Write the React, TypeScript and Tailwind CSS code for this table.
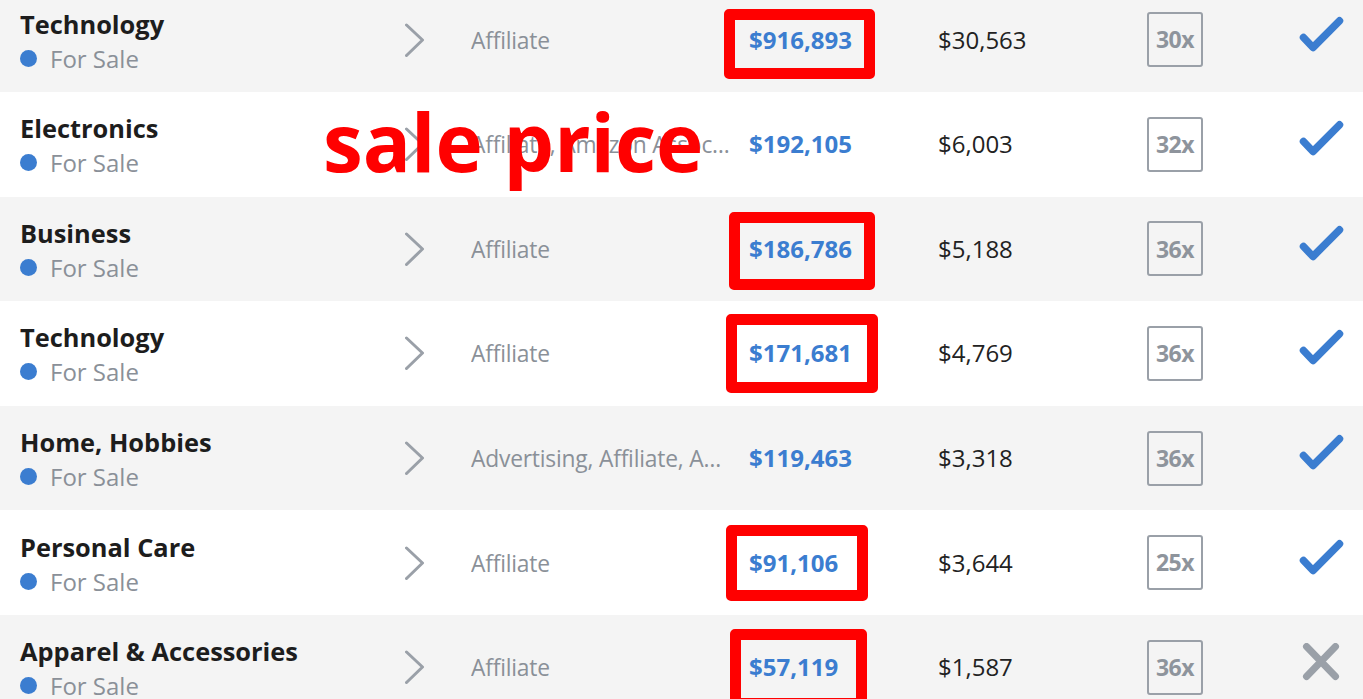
import React from "react";

type Listing = {
  name: string;
  type: string;
  price: string;
  monthly: string;
  multiple: string;
  verified: boolean;
};

const listings: Listing[] = [
  { name: "Technology", type: "Affiliate", price: "$916,893", monthly: "$30,563", multiple: "30x", verified: true },
  { name: "Electronics", type: "Affiliate, Amazon Associates", price: "$192,105", monthly: "$6,003", multiple: "32x", verified: true },
  { name: "Business", type: "Affiliate", price: "$186,786", monthly: "$5,188", multiple: "36x", verified: true },
  { name: "Technology", type: "Affiliate", price: "$171,681", monthly: "$4,769", multiple: "36x", verified: true },
  { name: "Home, Hobbies", type: "Advertising, Affiliate, Amazon Associates", price: "$119,463", monthly: "$3,318", multiple: "36x", verified: true },
  { name: "Personal Care", type: "Affiliate", price: "$91,106", monthly: "$3,644", multiple: "25x", verified: true },
  { name: "Apparel & Accessories", type: "Affiliate", price: "$57,119", monthly: "$1,587", multiple: "36x", verified: false },
];

// annotation boxes drawn over the price column
const marks = [
  "left-[724px] top-[9px] w-[151px] h-[70px]",
  "left-[729px] top-[212px] w-[146px] h-[78px]",
  "left-[726px] top-[314px] w-[152px] h-[79px]",
  "left-[726px] top-[525px] w-[142px] h-[76px]",
  "left-[730px] top-[629px] w-[137px] h-[80px]",
];

function Chevron() {
  return (
    <svg width="20" height="36" viewBox="0 0 20 36" fill="none">
      <path d="M1.5 3 L17.5 18 L1.5 33.5" stroke="#9aa0a8" strokeWidth="3" strokeLinecap="round" strokeLinejoin="round" />
    </svg>
  );
}

function Status({ ok }: { ok: boolean }) {
  return (
    <svg width="48" height="48" viewBox="0 0 48 48" fill="none">
      {ok ? (
        <path d="M6.5 21.5 L16 31.5 L42.5 4.8" stroke="#3b7dd0" strokeWidth="7.5" strokeLinecap="round" strokeLinejoin="round" />
      ) : (
        <path d="M9.5 3.5 L38.5 33.5 M38.5 3.5 L9.5 33.5" stroke="#9aa0a8" strokeWidth="7" strokeLinecap="round" />
      )}
    </svg>
  );
}

function Row({ item, shaded }: { item: Listing; shaded: boolean }) {
  return (
    <div className={`flex h-[104.6px] items-center pl-[20px] ${shaded ? "bg-[#f4f4f4]" : "bg-white"}`}>
      <div className="w-[385px] shrink-0 pt-[3px]">
        <div className="text-[25.4px] font-bold leading-[34px] text-[#1d1d1d]">{item.name}</div>
        <div className="flex items-center gap-[13px] text-[24px] leading-[35px] text-[#8a9098]">
          <span className="h-[17px] w-[17px] rounded-full bg-[#3b7dd0]" />
          For Sale
        </div>
      </div>
      <div className="w-[66px] shrink-0">
        <Chevron />
      </div>
      <div className="w-[262px] shrink-0 truncate pt-[2px] text-[22.8px] tracking-[-0.2px] text-[#8a9098]">{item.type}</div>
      <div className="ml-[16px] w-[189px] shrink-0 text-[24px] font-bold text-[#3b7dd0]">{item.price}</div>
      <div className="w-[209px] shrink-0 text-[24px] text-[#222]">{item.monthly}</div>
      <div className="flex h-[55px] w-[56px] shrink-0 items-center justify-center rounded-[3px] border-2 border-[#9aa0a8] text-[23px] font-bold tracking-[-0.5px] text-[#8e949c]">
        {item.multiple}
      </div>
      <div className="ml-[94px] shrink-0">
        <Status ok={item.verified} />
      </div>
    </div>
  );
}

export default function App() {
  return (
    <div className="relative h-[699px] w-[1363px] overflow-hidden bg-white font-['Open_Sans',sans-serif]">
      <div className="-mt-[12.6px]">
        {listings.map((item, i) => (
          <Row key={i} item={item} shaded={i % 2 === 0} />
        ))}
      </div>

      {marks.map((m, i) => (
        <div key={i} className={`absolute rounded-[5px] border-[11px] border-[#ff0000] ${m}`} />
      ))}
      <div className="absolute left-[323px] top-[101px] text-[80px] font-bold leading-[80px] text-[#ff0000]">
        sale price
      </div>
    </div>
  );
}
